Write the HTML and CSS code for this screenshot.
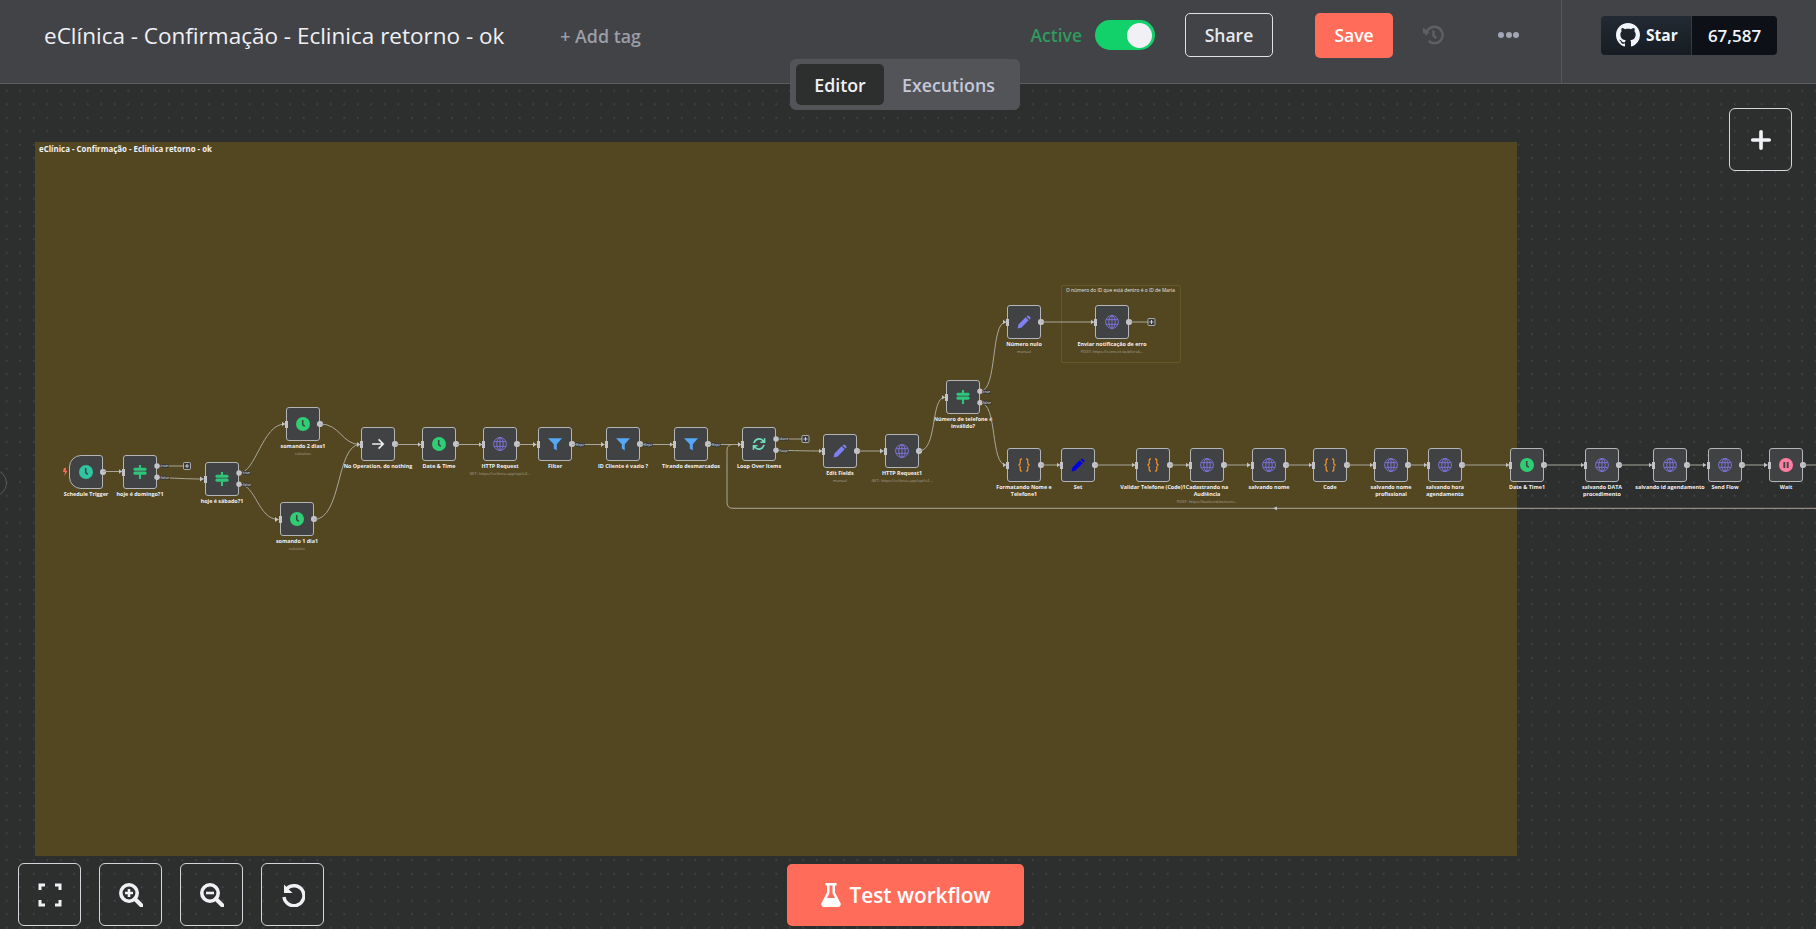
FILE: index.html
```html
<!DOCTYPE html>
<html lang="en">
<head>
    <meta charset="UTF-8">
    <meta name="viewport" content="width=device-width, initial-scale=1.0">
    <title>eClínica - Confirmação - Eclinica retorno - ok</title>
    <link rel="stylesheet" href="styles.css">
</head>
<body>
    <!-- icon set -->
    <svg class="icon-defs" width="0" height="0">
        <defs>
            <symbol id="i-clock" viewBox="0 0 24 24"><circle cx="12" cy="12" r="12" fill="currentColor"/><path d="M11.5 5v8l3.5 3" fill="none" stroke="#414244" stroke-width="2.6"/></symbol>
            <symbol id="i-signs" viewBox="0 0 24 24"><path fill="currentColor" d="M10.2 0h3.6v4.500H21.500L24 7.250 21.500 10H2.500L0 7.250 2.500 4.500h7.700zM2.500 11.200h19L24 14l-2.500 2.800h-7.700V24h-3.600v-7.200H2.500L0 14z"/></symbol>
            <symbol id="i-arrow" viewBox="0 0 24 24"><path d="M2 12h19M13 4l8 8-8 8" fill="none" stroke="currentColor" stroke-width="2.800"/></symbol>
            <symbol id="i-globe" viewBox="0 0 24 24"><g fill="none" stroke="currentColor" stroke-width="1.500"><circle cx="12" cy="12" r="11"/><ellipse cx="12" cy="12" rx="5.500" ry="11"/><path d="M12 1v22M2 8h20M2 16h20"/></g></symbol>
            <symbol id="i-filter" viewBox="0 0 24 24"><path fill="currentColor" d="M0 2h24L15 12.500V23l-5-3.500v-7z"/></symbol>
            <symbol id="i-sync" viewBox="0 0 24 24"><path d="M3.500 10.500A8.800 8.800 0 0 1 18.500 6l2.500 2.500M21.500 2v7h-7M20.500 13.500A8.800 8.800 0 0 1 5.500 18L3 15.500M2.500 22v-7h7" fill="none" stroke="currentColor" stroke-width="2.800"/></symbol>
            <symbol id="i-pencil" viewBox="0 0 24 24"><path fill="currentColor" d="M1 23l1.500-6.800L14.800 4l5.200 5.200L7.800 21.500zM16.300 2.500l1-1a2.200 2.200 0 0 1 3.100 0l2.200 2.200a2.200 2.200 0 0 1 0 3.100l-1 1z"/></symbol>
            <symbol id="i-code" viewBox="0 0 24 24"><path d="M8.500 1.500C4.500 1.500 5.500 5 5.500 8c0 2.500-1 3.500-3 4 2 .5 3 1.500 3 4 0 3-1 6.500 3 6.500M15.500 1.500c4 0 3 3.500 3 6.500 0 2.500 1 3.500 3 4-2 .5-3 1.500-3 4 0 3 1 6.500-3 6.500" fill="none" stroke="currentColor" stroke-width="2"/></symbol>
            <symbol id="i-wait" viewBox="0 0 24 24"><circle cx="12" cy="12" r="12" fill="currentColor"/><path fill="#414244" d="M7.500 7h3.200v10H7.500zM13.300 7h3.200v10h-3.200z"/></symbol>
        </defs>
    </svg>

    <div class="app">
        <header class="topbar">
            <div class="workflow-name">eClínica - Confirmação - Eclinica retorno - ok</div>
            <div class="add-tag">+ Add tag</div>
            <div class="actions">
                <span class="active-label">Active</span>
                <span class="toggle"><span class="knob"></span></span>
                <button class="btn-share">Share</button>
                <button class="btn-save">Save</button>
                <svg class="history" viewBox="0 0 24 24">
                    <path d="M4.500 12a9 9 0 1 1 2.700 6.400M12.500 7v5.500l3 3" fill="none" stroke="currentColor" stroke-width="2.600"/>
                    <path d="M1 3.500l7.500 6.500H1z" fill="currentColor"/>
                </svg>
                <span class="dots"><i></i><i></i><i></i></span>
            </div>
            <div class="star-wrap">
                <div class="github-star">
                    <span class="star-left">
                        <svg class="gh-mark" viewBox="0 0 16 16"><path fill="currentColor" d="M8 0C3.580 0 0 3.580 0 8c0 3.540 2.290 6.530 5.470 7.590.4.07.55-.17.55-.38 0-.19-.01-.82-.01-1.490-2.010.37-2.530-.49-2.690-.94-.09-.23-.48-.94-.82-1.130-.28-.15-.68-.52-.01-.53.63-.01 1.080.58 1.230.82.72 1.210 1.870.87 2.330.66.07-.52.28-.87.51-1.070-1.780-.2-3.640-.89-3.640-3.950 0-.87.31-1.590.82-2.150-.08-.2-.36-1.020.08-2.120 0 0 .67-.21 2.200.82.64-.18 1.320-.27 2-.27.68 0 1.360.09 2 .27 1.530-1.040 2.200-.82 2.200-.82.44 1.100.16 1.920.08 2.120.51.56.82 1.270.82 2.150 0 3.070-1.870 3.750-3.650 3.950.29.25.54.73.54 1.480 0 1.070-.01 1.930-.01 2.200 0 .21.15.46.55.38A8.013 8.013 0 0016 8c0-4.420-3.580-8-8-8z"/></svg>
                        Star
                    </span>
                    <span class="star-count">67,587</span>
                </div>
            </div>
        </header>

        <div class="tabs">
            <span class="tab tab-active">Editor</span>
            <span class="tab">Executions</span>
        </div>

        <main class="canvas">
            <div class="graph">
                <div class="sticky sticky-main"><span class="sticky-title">eClínica - Confirmação - Eclinica retorno - ok</span></div>
                <div class="sticky sticky-note"><span class="note-title">O número do ID que está dentro é o ID de Maria</span></div>

                <div class="node trigger n1"><svg class="icon c-teal"><use href="#i-clock"/></svg><div class="label">Schedule Trigger</div></div>
                <svg class="bolt" viewBox="0 0 10 18"><path fill="#ff6d5a" d="M2 0h5L5.500 6H10L3 18l1.500-9H0z"/></svg>
                <div class="node two n2"><svg class="icon c-green"><use href="#i-signs"/></svg><div class="label">hoje é domingo?1</div></div>
                <div class="node two n3"><svg class="icon c-green"><use href="#i-signs"/></svg><div class="label">hoje é sábado?1</div></div>
                <div class="node n4"><svg class="icon c-clock"><use href="#i-clock"/></svg><div class="label">somando 2 dias1</div><div class="sub">calculate</div></div>
                <div class="node n5"><svg class="icon c-clock"><use href="#i-clock"/></svg><div class="label">somando 1 dia1</div><div class="sub">calculate</div></div>
                <div class="node n6"><svg class="icon c-white"><use href="#i-arrow"/></svg><div class="label">No Operation, do nothing</div></div>
                <div class="node n7"><svg class="icon c-clock"><use href="#i-clock"/></svg><div class="label">Date &amp; Time</div></div>
                <div class="node n8"><svg class="icon c-globe"><use href="#i-globe"/></svg><div class="label">HTTP Request</div><div class="sub">GET: https://eclinica.app/api/v2...</div></div>
                <div class="node n9"><svg class="icon c-blue"><use href="#i-filter"/></svg><div class="label">Filter</div></div>
                <div class="node n10"><svg class="icon c-blue"><use href="#i-filter"/></svg><div class="label">ID Cliente é vazio ?</div></div>
                <div class="node n11"><svg class="icon c-blue"><use href="#i-filter"/></svg><div class="label">Tirando desmarcados</div></div>
                <div class="node two n12"><svg class="icon c-mint"><use href="#i-sync"/></svg><div class="label">Loop Over Items</div></div>
                <div class="node n13"><svg class="icon c-violet"><use href="#i-pencil"/></svg><div class="label">Edit Fields</div><div class="sub">manual</div></div>
                <div class="node n14"><svg class="icon c-globe"><use href="#i-globe"/></svg><div class="label">HTTP Request1</div><div class="sub">GET: https://eclinica.app/api/v2...</div></div>
                <div class="node two n15"><svg class="icon c-green"><use href="#i-signs"/></svg><div class="label">Número de telefone é<br>inválido?</div></div>
                <div class="node n16"><svg class="icon c-violet"><use href="#i-pencil"/></svg><div class="label">Número nulo</div><div class="sub">manual</div></div>
                <div class="node n17"><svg class="icon c-globe"><use href="#i-globe"/></svg><div class="label">Enviar notificação de erro</div><div class="sub">POST: https://connect.weblivrok...</div></div>
                <div class="node n18"><svg class="icon c-orange"><use href="#i-code"/></svg><div class="label">Formatando Nome e<br>Telefone1</div></div>
                <div class="node n19"><svg class="icon c-pure"><use href="#i-pencil"/></svg><div class="label">Set</div></div>
                <div class="node n20"><svg class="icon c-orange"><use href="#i-code"/></svg><div class="label">Validar Telefone (Code)1</div></div>
                <div class="node n21"><svg class="icon c-globe"><use href="#i-globe"/></svg><div class="label">Cadastrando na<br>Audiência</div><div class="sub">POST: https://backend.botconv...</div></div>
                <div class="node n22"><svg class="icon c-globe"><use href="#i-globe"/></svg><div class="label">salvando nome</div></div>
                <div class="node n23"><svg class="icon c-orange"><use href="#i-code"/></svg><div class="label">Code</div></div>
                <div class="node n24"><svg class="icon c-globe"><use href="#i-globe"/></svg><div class="label">salvando nome<br>profissional</div></div>
                <div class="node n25"><svg class="icon c-globe"><use href="#i-globe"/></svg><div class="label">salvando hora<br>agendamento</div></div>
                <div class="node n26"><svg class="icon c-clock"><use href="#i-clock"/></svg><div class="label">Date &amp; Time1</div></div>
                <div class="node n27"><svg class="icon c-globe"><use href="#i-globe"/></svg><div class="label">salvando DATA<br>procedimento</div></div>
                <div class="node n28"><svg class="icon c-globe"><use href="#i-globe"/></svg><div class="label">salvando id agendamento</div></div>
                <div class="node n29"><svg class="icon c-globe"><use href="#i-globe"/></svg><div class="label">Send Flow</div></div>
                <div class="node n30"><svg class="icon c-pink"><use href="#i-wait"/></svg><div class="label">Wait</div></div>

                <!-- connections, in page coordinates -->
                <svg class="wires" viewBox="0 0 1816 929">
                    <defs>
                        <marker id="tip" markerUnits="userSpaceOnUse" markerWidth="4" markerHeight="6" refX="3.500" refY="3" orient="auto"><path d="M0 .5L3.500 3 0 5.500z" fill="#c3c4c9"/></marker>
                    </defs>
                    <g class="wire-end">
                        <path d="M103 471.500H122"/>
                        <path d="M157 477.500C175 478 185 479 203.500 479"/>
                        <path d="M239 473C256 473 262 424 285 424"/>
                        <path d="M239 484.300C256 484.300 258 519.500 278.500 519.500"/>
                        <path d="M320.500 424C340 424 342 444.500 360 444.500"/>
                        <path d="M314 519.500C342 519.500 336 444.500 360 444.500"/>
                        <path d="M395.500 444.500H421"/>
                        <path d="M456.500 444.500H482"/>
                        <path d="M517.500 444.500H536.500"/>
                        <path d="M572 444.500H604.500"/>
                        <path d="M640 444.500H673"/>
                        <path d="M708 444.500H741"/>
                        <path d="M776 450.300C795 450.500 805 451 822 451"/>
                        <path d="M857.500 451H883.500"/>
                        <path d="M918.700 451C938 451 930 397.300 945 397.300"/>
                        <path d="M980 391.300C998 391.300 990 322 1006 322"/>
                        <path d="M980 402.700C998 402.700 990 465 1006 465"/>
                        <path d="M1041 322H1094"/>
                        <path d="M1041 465H1060"/>
                        <path d="M1095 465H1135"/>
                        <path d="M1170 465H1189"/>
                        <path d="M1224.700 465H1250.500"/>
                        <path d="M1285.700 465H1312"/>
                        <path d="M1347 465H1373"/>
                        <path d="M1408 465H1427"/>
                        <path d="M1462.500 465H1509"/>
                        <path d="M1544 465H1584"/>
                        <path d="M1619 465H1652"/>
                        <path d="M1687 465H1706"/>
                        <path d="M1741.500 465H1767.500"/>
                        <path d="M1816 508.300H733Q727 508.300 727 502.300V450Q727 444.500 733 444.500H741"/>
                    </g>
                    <g class="wire-plain">
                        <path d="M157 466H183"/>
                        <path d="M776 439H802"/>
                        <path d="M1129.500 322H1148"/>
                        <path d="M1802.400 465H1816"/>
                    </g>
                    <path class="back-mark" d="M1277 506.500L1273 508.300 1277 510.200z"/>

                    <g class="ports">
                        <circle cx="157" cy="466" r="2.700"/><circle cx="157" cy="477.300" r="2.700"/>
                        <circle cx="239" cy="473" r="2.700"/><circle cx="239" cy="484.300" r="2.700"/>
                        <circle cx="776" cy="439" r="2.700"/><circle cx="776" cy="450.300" r="2.700"/>
                        <circle cx="980" cy="391.300" r="2.700"/><circle cx="980" cy="402.700" r="2.700"/>
                    </g>

                    <g class="port-text">
                        <text x="161" y="467.300">true</text><text x="161" y="478.600">false</text>
                        <text x="243" y="474.300">true</text><text x="243" y="485.600">false</text>
                        <text x="576" y="445.800">Kept</text><text x="644" y="445.800">Kept</text><text x="712" y="445.800">Kept</text>
                        <text x="780" y="440.300">done</text><text x="780" y="451.600">loop</text>
                        <text x="983" y="392.600">true</text><text x="983" y="404">false</text>
                    </g>

                    <g class="plus-box">
                        <rect x="183.500" y="462.500" width="7" height="7" rx="1"/><path d="M187 464v4M185 466h4"/>
                        <rect x="802" y="435.500" width="7" height="7" rx="1"/><path d="M805.500 437v4M803.500 439h4"/>
                        <rect x="1148" y="318.500" width="7" height="7" rx="1"/><path d="M1151.500 320v4M1149.500 322h4"/>
                    </g>
                </svg>
            </div>

            <div class="edge-handle"></div>

            <button class="tool-btn add-node">
                <svg class="tool-icon" viewBox="0 0 24 24"><path d="M12 3v18M3 12h18" fill="none" stroke="currentColor" stroke-width="4" stroke-linecap="round"/></svg>
            </button>

            <div class="zoom-tools">
                <button class="tool-btn">
                    <svg class="tool-icon" viewBox="0 0 24 24"><path d="M2 7V2h5M17 2h5v5M22 17v5h-5M7 22H2v-5" fill="none" stroke="currentColor" stroke-width="3"/></svg>
                </button>
                <button class="tool-btn">
                    <svg class="tool-icon" viewBox="0 0 24 24"><g fill="none" stroke="currentColor"><circle cx="10" cy="10" r="8.200" stroke-width="3.600"/><path d="M16 16l6.500 6.500" stroke-width="4" stroke-linecap="round"/><path d="M10 6v8M6 10h8" stroke-width="2.600"/></g></svg>
                </button>
                <button class="tool-btn">
                    <svg class="tool-icon" viewBox="0 0 24 24"><g fill="none" stroke="currentColor"><circle cx="10" cy="10" r="8.200" stroke-width="3.600"/><path d="M16 16l6.500 6.500" stroke-width="4" stroke-linecap="round"/><path d="M6 10h8" stroke-width="2.600"/></g></svg>
                </button>
                <button class="tool-btn">
                    <svg class="tool-icon" viewBox="0 0 24 24"><path d="M6 5.500A10 10 0 1 1 3 14" fill="none" stroke="currentColor" stroke-width="3.400"/><path d="M3 1.500v8.500h8.500z" fill="currentColor"/></svg>
                </button>
            </div>

            <button class="btn-test">
                <svg class="flask" viewBox="0 0 20 24"><path fill="currentColor" d="M4.500 0h11v2.500H14v7l5.500 10.500c.8 1.800-.3 4-2.500 4H3c-2.200 0-3.300-2.200-2.500-4L6 9.500v-7H4.500zM8.500 2.500v7.700L6 15h8l-2.500-4.800V2.500z"/></svg>
                Test workflow
            </button>
        </main>
    </div>
</body>
</html>
```
FILE: styles.css
```css
* {
    box-sizing: border-box;
}
html, body {
    margin: 0;
    height: 100%;
    overflow: hidden;
}
body {
    font-family: "Open Sans", sans-serif;
    background-color: #2d2e2e;
    color: #f0f0f5;
}
button {
    font-family: inherit;
    cursor: pointer;
}
.icon-defs {
    position: absolute;
}
.app {
    position: relative;
    display: flex;
    flex-direction: column;
    height: 100vh;
}

/* top bar */
.topbar {
    display: flex;
    align-items: flex-start;
    flex: 0 0 84px;
    padding-left: 44px;
    background-color: #424346;
    border-bottom: 1px solid #5c5d60;
}
.workflow-name {
    display: flex;
    align-items: center;
    height: 71px;
    font-size: 22.500px;
    color: #f0f0f5;
    white-space: nowrap;
}
.add-tag {
    display: flex;
    align-items: center;
    height: 71px;
    margin-left: 56px;
    font-size: 17.800px;
    font-weight: 600;
    color: #9b9ea6;
}
.actions {
    display: flex;
    align-items: center;
    margin-left: auto;
    height: 70px;
}
.active-label {
    font-size: 17.500px;
    font-weight: 600;
    color: #2e9b5f;
}
.toggle {
    display: flex;
    align-items: center;
    justify-content: flex-end;
    width: 60px;
    height: 30px;
    margin-left: 13px;
    padding-right: 3px;
    border-radius: 15px;
    background-color: #13d16a;
}
.knob {
    width: 25px;
    height: 25px;
    border-radius: 50%;
    background-color: #f0f0f5;
}
.btn-share {
    width: 88px;
    height: 44px;
    margin-left: 30px;
    border: 1px solid #e0e1e6;
    border-radius: 5px;
    background: transparent;
    color: #e6e8f0;
    font-size: 17.500px;
    font-weight: 600;
}
.btn-save {
    width: 78px;
    height: 45px;
    margin-left: 42px;
    border: none;
    border-radius: 5px;
    background-color: #ff6d5a;
    color: #fff;
    font-size: 17.500px;
    font-weight: 600;
}
.history {
    width: 22px;
    height: 22px;
    margin-left: 29px;
    color: #5f6063;
}
.dots {
    display: flex;
    gap: 1.500px;
    margin-left: 54px;
}
.dots i {
    width: 6px;
    height: 6px;
    border-radius: 50%;
    background-color: #a3a7b5;
}
.star-wrap {
    display: flex;
    align-items: center;
    height: 83px;
    margin-left: 42px;
    padding: 0 39px 13px 39px;
    border-left: 1px solid #55565a;
}
.github-star {
    display: flex;
    height: 39px;
    border-radius: 4px;
    overflow: hidden;
    font-size: 15.500px;
    font-weight: 700;
}
.star-left {
    display: flex;
    align-items: center;
    gap: 6px;
    width: 91px;
    padding-left: 15px;
    background: linear-gradient(#232a33, #171c23);
    border-right: 1px solid #343a42;
    color: #f0f6fc;
}
.gh-mark {
    width: 24px;
    height: 24px;
}
.star-count {
    display: flex;
    align-items: center;
    justify-content: center;
    width: 85px;
    background-color: #0d1117;
    color: #f0f6fc;
    font-size: 17px;
    font-weight: 600;
}

/* editor / executions switch */
.tabs {
    position: absolute;
    left: 790px;
    top: 59px;
    z-index: 5;
    display: flex;
    width: 230px;
    height: 51px;
    padding: 5px 6px;
    border-radius: 6px;
    background-color: #535458;
    font-size: 17.800px;
    font-weight: 600;
}
.tab {
    display: flex;
    align-items: center;
    padding: 0 18px;
    color: #c4c8d8;
    white-space: nowrap;
}
.tab-active {
    width: 88px;
    justify-content: center;
    padding: 0;
    border-radius: 5px;
    background-color: #2d2e2e;
    color: #f0f0f5;
}

/* canvas */
.canvas {
    position: relative;
    flex: 1;
    overflow: hidden;
    background-color: #2d2e2e;
    background-image: radial-gradient(circle, #3f4041 .7px, transparent .9px);
    background-size: 13.500px 13.500px;
}
.graph {
    position: absolute;
    left: 0;
    top: -84px;
    width: 1816px;
    height: 929px;
}
.sticky {
    position: absolute;
}
.sticky-main {
    left: 35px;
    top: 142px;
    width: 1482px;
    height: 714px;
    padding: 2px 4px;
    background-color: #534721;
}
.sticky-title {
    display: block;
    font-size: 7.900px;
    font-weight: 700;
    color: #f0f0f5;
    white-space: nowrap;
}
.sticky-note {
    left: 1061px;
    top: 285px;
    width: 120px;
    height: 78px;
    padding: 1px 4px;
    border: 1px solid #665928;
    border-radius: 2px;
}
.note-title {
    display: block;
    font-size: 4.850px;
    color: #e4e4e4;
    white-space: nowrap;
}

/* workflow nodes */
.node {
    position: absolute;
    display: flex;
    align-items: center;
    justify-content: center;
    width: 34px;
    height: 34px;
    border: 1px solid #b4b5b8;
    border-radius: 3px;
    background-color: #414244;
}
.node::before {
    content: "";
    position: absolute;
    left: -2px;
    top: 12.500px;
    width: 2.500px;
    height: 7px;
    background-color: #c3c4c9;
}
.node::after {
    content: "";
    position: absolute;
    right: -3.700px;
    top: 13.300px;
    width: 5.400px;
    height: 5.400px;
    border-radius: 50%;
    background-color: #c3c4c9;
}
.node.two::after {
    display: none;
}
.trigger {
    border-radius: 12px 3px 3px 12px;
}
.trigger::before {
    display: none;
}
.icon {
    width: 14px;
    height: 14px;
}
.label {
    position: absolute;
    left: -20px;
    right: -20px;
    top: 35px;
    font-size: 5.400px;
    font-weight: 700;
    line-height: 7px;
    color: #f0f0f5;
    text-align: center;
    white-space: nowrap;
}
.sub {
    position: absolute;
    left: -20px;
    right: -20px;
    top: 42.500px;
    font-size: 4px;
    line-height: 6px;
    color: #a5a294;
    text-align: center;
    white-space: nowrap;
}
.label:has(br) + .sub {
    top: 49.500px;
}
.bolt {
    position: absolute;
    left: 63px;
    top: 468px;
    width: 4.500px;
    height: 8px;
}
.c-teal { color: #31c4a0; }
.c-green { color: #2fc47a; }
.c-clock { color: #2fce74; }
.c-white { color: #eceded; }
.c-globe { color: #8478e6; }
.c-blue { color: #55a8f5; }
.c-mint { color: #6fe0bb; }
.c-violet { color: #8080f5; }
.c-pure { color: #0000e6; }
.c-orange { color: #ff9922; }
.c-pink { color: #ff7fa3; }

.n1 { left: 69px; top: 455px; }
.n2 { left: 123px; top: 455px; }
.n3 { left: 205px; top: 462px; }
.n4 { left: 286px; top: 407px; }
.n5 { left: 280px; top: 502px; }
.n6 { left: 361px; top: 427px; }
.n7 { left: 422px; top: 427px; }
.n8 { left: 483px; top: 427px; }
.n9 { left: 538px; top: 427px; }
.n10 { left: 606px; top: 427px; }
.n11 { left: 674px; top: 427px; }
.n12 { left: 742px; top: 427px; }
.n13 { left: 823px; top: 434px; }
.n14 { left: 885px; top: 434px; }
.n15 { left: 946px; top: 380px; }
.n16 { left: 1007px; top: 305px; }
.n17 { left: 1095px; top: 305px; }
.n18 { left: 1007px; top: 448px; }
.n19 { left: 1061px; top: 448px; }
.n20 { left: 1136px; top: 448px; }
.n21 { left: 1190px; top: 448px; }
.n22 { left: 1252px; top: 448px; }
.n23 { left: 1313px; top: 448px; }
.n24 { left: 1374px; top: 448px; }
.n25 { left: 1428px; top: 448px; }
.n26 { left: 1510px; top: 448px; }
.n27 { left: 1585px; top: 448px; }
.n28 { left: 1653px; top: 448px; }
.n29 { left: 1708px; top: 448px; }
.n30 { left: 1769px; top: 448px; }

/* connections */
.wires {
    position: absolute;
    left: 0;
    top: 0;
    width: 1816px;
    height: 929px;
    pointer-events: none;
}
.wire-end path, .wire-plain path {
    fill: none;
    stroke: #a9a79c;
    stroke-width: 1;
}
.wire-end path {
    marker-end: url(#tip);
}
.back-mark {
    fill: #c3c4c9;
}
.ports circle {
    fill: #c3c4c9;
}
.port-text text {
    font-size: 3.500px;
    font-weight: 600;
    fill: #c9c9c9;
    stroke: #38383a;
    stroke-width: 1.400px;
    paint-order: stroke;
}
.plus-box rect {
    fill: #38393b;
    stroke: #c3c4c9;
    stroke-width: .8;
}
.plus-box path {
    fill: none;
    stroke: #e8e8ee;
    stroke-width: .8;
}

/* overlays on the canvas */
.edge-handle {
    position: absolute;
    left: -21px;
    top: 385px;
    width: 28px;
    height: 28px;
    border: 1px solid #57585a;
    border-radius: 50%;
    background-color: #2d2e2e;
}
.tool-btn {
    display: flex;
    align-items: center;
    justify-content: center;
    width: 63px;
    height: 63px;
    padding: 0;
    border: 1px solid #d4d5da;
    border-radius: 6px;
    background: transparent;
    color: #f0f0f5;
}
.tool-icon {
    width: 24px;
    height: 24px;
}
.add-node .tool-icon {
    width: 22px;
    height: 22px;
}
.add-node {
    position: absolute;
    left: 1729px;
    top: 24px;
}
.zoom-tools {
    position: absolute;
    left: 18px;
    bottom: 3px;
    display: flex;
    gap: 18px;
}
.btn-test {
    position: absolute;
    left: 787px;
    bottom: 3px;
    display: flex;
    align-items: center;
    justify-content: center;
    gap: 9px;
    width: 237px;
    height: 62px;
    padding-right: 6px;
    border: none;
    border-radius: 5px;
    background-color: #ff6d5a;
    color: #fff;
    font-size: 20.800px;
    font-weight: 600;
}
.flask {
    width: 20px;
    height: 24px;
}
```
